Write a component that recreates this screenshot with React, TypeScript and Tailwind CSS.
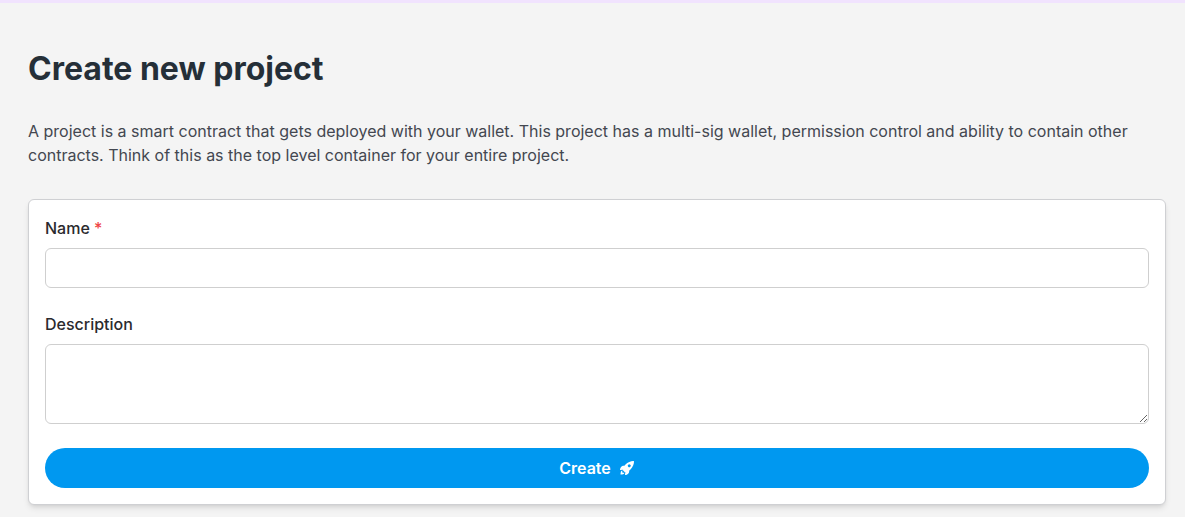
import { IoRocketSharp } from "react-icons/io5";

export default function App() {
  return (
    <div className="min-h-screen border-t-3 border-[#f1e3fe] bg-[#f4f4f4] font-['Inter',sans-serif] text-base text-[#2a2a2e]">
      <main className="pt-11 pr-[19px] pb-3 pl-7">
        <h1 className="text-[32px] leading-11 font-bold text-[#252f38]">Create new project</h1>
        <p className="mt-7 leading-6 text-[#434750]">
          A project is a smart contract that gets deployed with your wallet. This project has a multi-sig wallet, permission control and ability to contain other contracts. Think of this as the top level container for your entire project.
        </p>
        <form className="mt-8 flex flex-col rounded-md border border-[#cfd0d3] bg-white p-4 shadow-md">
          <label htmlFor="name" className="mb-2 leading-6 font-medium">
            Name <span className="text-[#ef4444]">*</span>
          </label>
          <input id="name" type="text" required className="h-10 rounded-md border border-[#cfcfcf] px-4 outline-none" />
          <label htmlFor="description" className="mt-6 mb-2 leading-6 font-medium">Description</label>
          <textarea id="description" className="h-20 resize-y rounded-md border border-[#cfcfcf] px-4 py-2 outline-none" />
          <button type="button" className="mt-6 flex h-10 items-center justify-center gap-2 rounded-full bg-[#0098f0] font-semibold text-white">
            Create <IoRocketSharp aria-hidden="true" />
          </button>
        </form>
      </main>
    </div>
  );
}
